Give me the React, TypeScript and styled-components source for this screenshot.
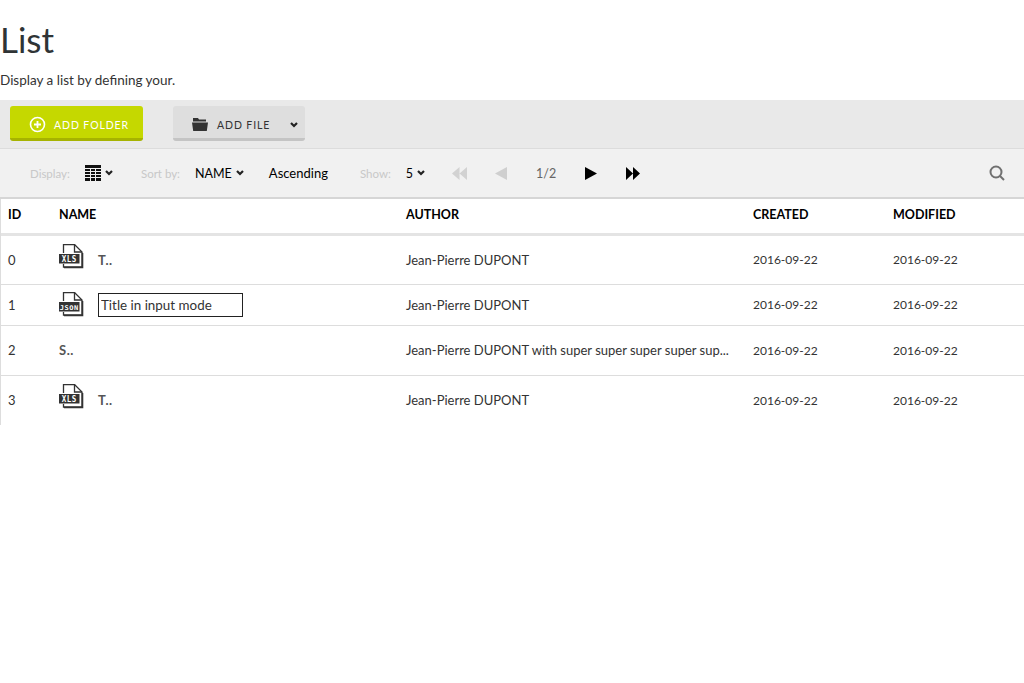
import React from 'react';
import styled, { createGlobalStyle } from 'styled-components';

const GlobalStyle = createGlobalStyle`
    * {
        box-sizing: border-box;
    }
    html, body {
        margin: 0;
        padding: 0;
        background: #fff;
        font-family: "Lato", "Noto Sans", sans-serif;
        color: #333;
    }
`;

const Page = styled.div`
    width: 1024px;
`;

const Head = styled.div`
    height: 100px;
    display: flex;
    flex-direction: column;
`;

const Title = styled.h1`
    margin: 17px 0 0 0;
    font-size: 35px;
    line-height: 44px;
    font-weight: 400;
    color: #2f3436;
`;

const Subtitle = styled.p`
    margin: 9px 0 0 0;
    font-size: 13.5px;
    line-height: 20px;
    color: #333;
`;

const ActionBar = styled.div`
    height: 49px;
    background: #e9e9e9;
    border-bottom: 1px solid #dcdcdc;
    display: flex;
    align-items: flex-start;
    padding: 6px 0 0 10px;
    gap: 30px;
`;

const AddFolder = styled.button`
    width: 133px;
    height: 35px;
    padding: 5px 0 0 19px;
    border: none;
    border-bottom: 3px solid #a6b300;
    border-radius: 3px;
    background: #c5d800;
    color: #fff;
    display: flex;
    align-items: center;
    gap: 8px;
    font-family: inherit;
    font-size: 10.5px;
    letter-spacing: 0.9px;
`;

const AddFile = styled.button`
    width: 132px;
    height: 35px;
    padding: 5px 7px 0 19px;
    border: none;
    border-bottom: 3px solid #c4c4c4;
    border-radius: 3px;
    background: #dedede;
    color: #333;
    display: flex;
    align-items: center;
    font-family: inherit;
    font-size: 10.5px;
    letter-spacing: 0.9px;
    svg:first-child {
        margin-right: 9px;
    }
    svg:last-child {
        margin-left: auto;
    }
`;

const Toolbar = styled.div`
    height: 50px;
    background: #f1f1f1;
    border-bottom: 2px solid #d6d6d6;
    display: flex;
    align-items: center;
    color: #000;
`;

const Label = styled.span<{ $left: number }>`
    margin-left: ${(p) => p.$left}px;
    font-size: 11.5px;
    color: #c8c8c8;
`;

const Control = styled.span<{ $left: number }>`
    margin-left: ${(p) => p.$left}px;
    display: flex;
    align-items: center;
    gap: 4px;
    font-size: 12.5px;
`;

const SortOrder = styled.span<{ $left: number }>`
    margin-left: ${(p) => p.$left}px;
    font-size: 13px;
`;

const Pager = styled.span<{ $left: number }>`
    margin-left: ${(p) => p.$left}px;
    font-size: 12.5px;
    color: #666;
`;

const NavIcon = styled.svg<{ $left: number }>`
    margin-left: ${(p) => p.$left}px;
    display: block;
`;

const SearchButton = styled.span`
    margin-left: auto;
    margin-right: 19px;
    display: flex;
`;

const Table = styled.div`
    border-left: 1px solid #ddd;
`;

const Row = styled.div<{ $height: number; $head?: boolean }>`
    height: ${(p) => p.$height}px;
    display: grid;
    grid-template-columns: 51px 347px 347px 140px 1fr;
    align-items: center;
    padding-left: 7px;
    padding-bottom: ${(p) => (p.$head ? 4 : 1)}px;
    font-size: 13px;
    color: #333;
    border-bottom: ${(p) => (p.$head ? '3px solid #e4e4e4' : '1px solid #ddd')};
    &:last-child {
        border-bottom: none;
    }
`;

const HeadCell = styled.div`
    font-size: 12.5px;
    font-weight: 700;
    color: #000;
`;

const Cell = styled.div`
    white-space: nowrap;
`;

const DateCell = styled.div`
    white-space: nowrap;
    font-size: 12px;
`;

const NameCell = styled.div`
    display: flex;
    align-items: center;
    color: #555;
    font-weight: 700;
    letter-spacing: 0.5px;
`;

const IconSlot = styled.svg<{ $raised: boolean }>`
    margin-right: 14px;
    margin-bottom: ${(p) => (p.$raised ? 7 : 0)}px;
    flex: none;
`;

const TitleInput = styled.input`
    width: 145px;
    height: 24px;
    border: 1px solid #222;
    border-radius: 0;
    padding: 0 2px;
    font-family: inherit;
    font-size: 13.4px;
    color: #333;
    outline: none;
`;

const Chevron = ({ color = '#222' }: { color?: string }) => (
    <svg width="8" height="6" viewBox="0 0 8 6">
        <path d="M1 1 L4 4 L7 1" fill="none" stroke={color} strokeWidth="2.2" />
    </svg>
);

const GridIcon = () => (
    <svg width="16" height="16" viewBox="0 0 16 16">
        <rect width="16" height="16" fill="#111" />
        <path d="M5.5 3v13M10.5 3v13M0 3.5h16M0 6.5h16M0 9.5h16M0 12.5h16" stroke="#f1f1f1" strokeWidth="1" />
    </svg>
);

const FileIcon = ({ label, raised }: { label: string; raised: boolean }) => (
    <IconSlot $raised={raised} width="25" height="25" viewBox="0 0 25 25">
        <path d="M4.5 9V0.5H15.5L23 8V23H4.5V20" fill="none" stroke="#333" strokeWidth="1.3" />
        <path d="M15.5 0.5V8H23" fill="none" stroke="#333" strokeWidth="1.3" />
        <path d="M5 23.5H23.5V9" fill="none" stroke="#333" strokeWidth="1.6" />
        <rect x="0" y="10" width="20.5" height="9.5" fill="#333" />
        <text
            x="10.2"
            y="17.6"
            textAnchor="middle"
            fill="#fff"
            fontSize={label.length > 3 ? 6.5 : 8}
            fontWeight="700"
            fontFamily="DejaVu Sans Mono, monospace"
            textLength={label.length > 3 ? 19 : 15}
            lengthAdjust="spacingAndGlyphs"
        >
            {label}
        </text>
    </IconSlot>
);

const rows = [
    { id: 0, height: 49, icon: 'XLS', name: 'T..', author: 'Jean-Pierre DUPONT' },
    { id: 1, height: 41, icon: 'JSON', input: true, author: 'Jean-Pierre DUPONT' },
    { id: 2, height: 50, name: 'S..', author: 'Jean-Pierre DUPONT with super super super super sup...' },
    { id: 3, height: 49, icon: 'XLS', name: 'T..', author: 'Jean-Pierre DUPONT' },
];

const App = () => (
    <Page>
        <GlobalStyle />
        <Head>
            <Title>List</Title>
            <Subtitle>Display a list by defining your.</Subtitle>
        </Head>
        <ActionBar>
            <AddFolder>
                <svg width="17" height="17" viewBox="0 0 17 17">
                    <circle cx="8.5" cy="8.5" r="7" fill="none" stroke="#fff" strokeWidth="1.6" />
                    <path d="M8.5 5v7M5 8.5h7" stroke="#fff" strokeWidth="1.8" />
                </svg>
                ADD FOLDER
            </AddFolder>
            <AddFile>
                <svg width="16" height="13" viewBox="0 0 16 13">
                    <path d="M1 0h5l1 1.5h7v2H1z M0 4.5h16l-1.2 8.5H1.2z" fill="#333" />
                </svg>
                ADD FILE
                <Chevron />
            </AddFile>
        </ActionBar>
        <Toolbar>
            <Label $left={30}>Display:</Label>
            <Control $left={15}>
                <GridIcon />
                <Chevron />
            </Control>
            <Label $left={28}>Sort by:</Label>
            <Control $left={15}>
                NAME
                <Chevron />
            </Control>
            <SortOrder $left={25}>Ascending</SortOrder>
            <Label $left={32}>Show:</Label>
            <Control $left={15}>
                5
                <Chevron />
            </Control>
            <NavIcon $left={27} width="15" height="13" viewBox="0 0 15 13">
                <path d="M7.5 0v13L0 6.5z M15 0v13L7.5 6.5z" fill="#d2d2d2" />
            </NavIcon>
            <NavIcon $left={28} width="12" height="13" viewBox="0 0 12 13">
                <path d="M12 0v13L0 6.5z" fill="#cfcfcf" />
            </NavIcon>
            <Pager $left={29}>1/2</Pager>
            <NavIcon $left={29} width="12" height="13" viewBox="0 0 12 13">
                <path d="M0 0v13L12 6.5z" fill="#000" />
            </NavIcon>
            <NavIcon $left={29} width="14" height="13" viewBox="0 0 14 13">
                <path d="M0 0v13L7 6.5z M7 0v13L14 6.5z" fill="#000" />
            </NavIcon>
            <SearchButton>
                <svg width="16" height="16" viewBox="0 0 16 16">
                    <circle cx="7" cy="7" r="5.5" fill="none" stroke="#707070" strokeWidth="2" />
                    <path d="M11 11l4 4" stroke="#707070" strokeWidth="2" />
                </svg>
            </SearchButton>
        </Toolbar>
        <Table>
            <Row $height={37} $head>
                <HeadCell>ID</HeadCell>
                <HeadCell>NAME</HeadCell>
                <HeadCell>AUTHOR</HeadCell>
                <HeadCell>CREATED</HeadCell>
                <HeadCell>MODIFIED</HeadCell>
            </Row>
            {rows.map((row) => (
                <Row key={row.id} $height={row.height}>
                    <Cell>{row.id}</Cell>
                    <NameCell>
                        {row.icon && <FileIcon label={row.icon} raised={!row.input} />}
                        {row.input ? <TitleInput defaultValue="Title in input mode" /> : row.name}
                    </NameCell>
                    <Cell>{row.author}</Cell>
                    <DateCell>2016-09-22</DateCell>
                    <DateCell>2016-09-22</DateCell>
                </Row>
            ))}
        </Table>
    </Page>
);

export default App;
